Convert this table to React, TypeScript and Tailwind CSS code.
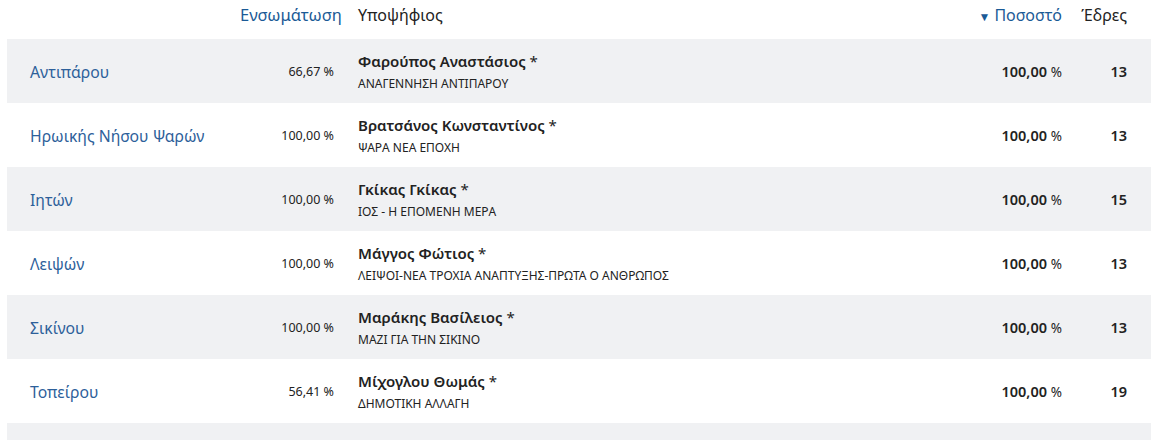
import React from "react";

const rows = [
  { m: "Αντιπάρου", e: "66,67", c: "Φαρούπος Αναστάσιος", p: "ΑΝΑΓΕΝΝΗΣΗ ΑΝΤΙΠΑΡΟΥ", s: "13" },
  { m: "Ηρωικής Νήσου Ψαρών", e: "100,00", c: "Βρατσάνος Κωνσταντίνος", p: "ΨΑΡΑ ΝΕΑ ΕΠΟΧΗ", s: "13" },
  { m: "Ιητών", e: "100,00", c: "Γκίκας Γκίκας", p: "ΙΟΣ - Η ΕΠΟΜΕΝΗ ΜΕΡΑ", s: "15" },
  { m: "Λειψών", e: "100,00", c: "Μάγγος Φώτιος", p: "ΛΕΙΨΟΙ-ΝΕΑ ΤΡΟΧΙΑ ΑΝΑΠΤΥΞΗΣ-ΠΡΩΤΑ Ο ΑΝΘΡΩΠΟΣ", s: "13" },
  { m: "Σικίνου", e: "100,00", c: "Μαράκης Βασίλειος", p: "ΜΑΖΙ ΓΙΑ ΤΗΝ ΣΙΚΙΝΟ", s: "13" },
  { m: "Τοπείρου", e: "56,41", c: "Μίχογλου Θωμάς", p: "ΔΗΜΟΤΙΚΗ ΑΛΛΑΓΗ", s: "19" },
  { m: "Χάλκης", e: "100,00", c: "Παπαδόπουλος Ανδρέας", p: "ΧΑΛΚΗ", s: "11" },
];

const grid = "grid grid-cols-[233px_106px_1fr_130px_89px]";

export default function App() {
  return (
    <div
      className="h-[440px] overflow-hidden bg-white pl-[7px] pr-[10px] text-[#222]"
      style={{ fontFamily: '"Noto Sans", "Open Sans", sans-serif' }}
    >
      <div className={`${grid} h-[39px] items-center pb-[9px] text-[16px]`}>
        <div />
        <div className="pr-3 text-right text-[16.5px] text-[#1a5a96]">Ενσωμάτωση</div>
        <div className="pl-3">Υποψήφιος</div>
        <div className="text-right text-[#1a5a96]">
          <span className="mr-[4px] text-[12px]">▼</span>Ποσοστό
        </div>
        <div className="pr-6 text-right">Έδρες</div>
      </div>
      {rows.map((r, i) => (
        <div
          key={i}
          className={`${grid} h-[64px] items-center ${i % 2 === 0 ? "bg-[#f0f1f3]" : "bg-white"}`}
        >
          <div className="pl-[23px] pt-[3px] text-[15.75px] text-[#2d609a]">{r.m}</div>
          <div className="pr-3 pt-[2px] text-right text-[12.5px]">{r.e} %</div>
          <div className="flex flex-col pl-3">
            <div className="text-[15px] font-semibold leading-[20px]">
              {r.c} <span className="font-normal">*</span>
            </div>
            <div className="mt-[5px] text-[12px] leading-[16px]">{r.p}</div>
          </div>
          <div className="pt-[1px] text-right text-[14.5px] font-semibold">
            100,00 <span className="font-normal text-[13.5px]">%</span>
          </div>
          <div className="pr-6 pt-[1px] text-right text-[14.5px] font-semibold">{r.s}</div>
        </div>
      ))}
    </div>
  );
}
